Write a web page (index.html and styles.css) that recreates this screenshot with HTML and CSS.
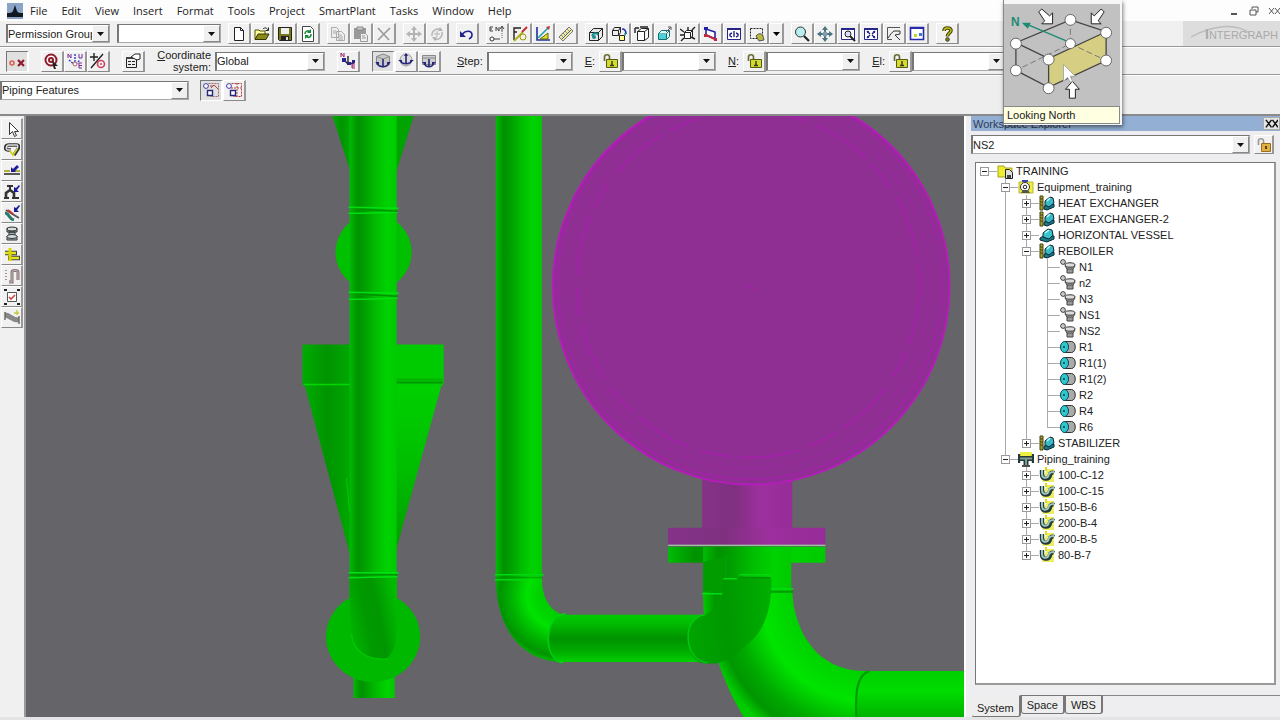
FILE: index.html
```
<!DOCTYPE html>
<html lang="en">
<head>
  <meta charset="UTF-8" />
  <meta name="viewport" content="width=device-width, initial-scale=1" />
  <title>SmartPlant 3D</title>
  <link rel="stylesheet" href="styles.css">
</head>
<body>
  <!-- Icon sprite, every symbol on a 16px grid -->
  <svg class="sprite" aria-hidden="true">
    <symbol id="new" viewBox="0 0 16 16"><path d="M3.500 1.500h6l3 3v10h-9z" fill="#fff" stroke="#222"/><path d="M9.500 1.500v3h3" fill="none" stroke="#222"/></symbol>
    <symbol id="open" viewBox="0 0 16 16"><path d="M1 13V4h4l1 1h5v3" fill="#ffffa0" stroke="#555000"/><path d="M1 13.500 4 8h11l-3 5.500z" fill="#8a8a1a" stroke="#333300"/><path d="M9 3c2-2 4-1 5 1M14.500 1.500v3h-3" fill="none" stroke="#222"/></symbol>
    <symbol id="save" viewBox="0 0 16 16"><path d="M1.500 1.500h13v13h-12l-1-1z" fill="#77771a" stroke="#222"/><path d="M4 2h8v6H4z" fill="#eee"/><path d="M4 10h8v4H4z" fill="#222"/><path d="M9 11h2v3H9z" fill="#ddd"/></symbol>
    <symbol id="refresh" viewBox="0 0 16 16"><path d="M2.500 .5h8l3 3v12h-11z" fill="#fff" stroke="#444"/><path d="M5 8c0-3 3-4 5-2M11 8c0 4-3 4-5 2" fill="none" stroke="#168c38" stroke-width="1.600"/><path d="M11 3v4H7zM5 13V9h4z" fill="#168c38"/></symbol>
    <symbol id="copy" viewBox="0 0 16 16"><path d="M1.500 1.500h5l2 2v8h-7zM6.500 5.500h5l3 3v6h-8z" fill="#eee" stroke="#aaa"/><path d="M3 5h3M3 7h3M8 9h4M8 11h5M8 13h5" stroke="#aaa"/></symbol>
    <symbol id="paste" viewBox="0 0 16 16"><path d="M1 2h12v11H1z" fill="#999"/><path d="M4 1h6v3H4z" fill="#ccc" stroke="#888"/><path d="M7.500 7.500h5l2 2v6h-7z" fill="#eee" stroke="#999"/><path d="M9 10h3M9 12h4" stroke="#999"/></symbol>
    <symbol id="delete" viewBox="0 0 16 16"><path d="M2 2l11 12M14 2L2 14" stroke="#999" stroke-width="1.600"/></symbol>
    <symbol id="move" viewBox="0 0 16 16"><path d="M8 2v12M2 8h12" stroke="#b4b4b4" stroke-width="2"/><path d="M8 0l3 4H5zM8 16l3-4H5zM0 8l4-3v6zM16 8l-4-3v6z" fill="#b4b4b4"/></symbol>
    <symbol id="rotate" viewBox="0 0 16 16"><path d="M3 10a6 6 0 0 1 9-6M13 6a6 6 0 0 1-8 7" fill="none" stroke="#b4b4b4" stroke-width="1.400"/><path d="M8 5v6M5 8h6" stroke="#b4b4b4"/><path d="M11 1l3 4-5 0zM6 15l-3-4 5 0z" fill="#b4b4b4"/></symbol>
    <symbol id="undo" viewBox="0 0 16 16"><path d="M3 9c3-5 10-5 10 0 0 2-1 3-3 4" fill="none" stroke="#23238c" stroke-width="1.600"/><path d="M1 5v6h6z" fill="#23238c"/></symbol>
    <symbol id="pointen" viewBox="0 0 16 16"><path d="M4 1H1v4h3M1 3h2M7 5V1l3 4V1M13 5V0M11 3l2-3 2 3M5 13h6" fill="none" stroke="#444"/><circle cx="3" cy="13" r="2" fill="#fff" stroke="#333"/><path d="M13 5v8" stroke="#666" stroke-dasharray="1 1"/></symbol>
    <symbol id="sketch" viewBox="0 0 16 16"><path d="M2 14V2h7M2 6h3" fill="none" stroke="#222" stroke-width="1.400"/><path d="M2 15l9-9" stroke="#b0b020" stroke-width="2"/><path d="M10 6l5-5" stroke="#c03030" stroke-width="2"/><circle cx="11" cy="11" r="3" fill="none" stroke="#999900"/></symbol>
    <symbol id="angle" viewBox="0 0 16 16"><path d="M2 1v13h13" fill="none" stroke="#2030a0" stroke-width="1.600"/><path d="M5 13l8-6v6z" fill="#dede2a" stroke="#666600"/><path d="M3 12L13 2" stroke="#20a0b0" stroke-width="1.600"/><path d="M11 1l4-1-1 4z" fill="#c03030"/></symbol>
    <symbol id="ruler" viewBox="0 0 16 16"><path d="M1 11L11 1l4 4L5 15z" fill="#eeee9c" stroke="#777"/><path d="M4 13l9-9" stroke="#5050aa"/><path d="M3 9l2 2M5 7l2 2M7 5l2 2M9 3l2 2" stroke="#888"/></symbol>
    <symbol id="cube" viewBox="0 0 16 16"><path d="M1.500 6.500h9v8h-9zM1.500 6.500l4-4h9l-4 4M14.500 2.500v8l-4 4" fill="#e6e6e6" stroke="#222"/><path d="M4 10c2-4 5-3 6-1" fill="none" stroke="#189090" stroke-width="2"/><circle cx="6" cy="11" r="2" fill="#189090"/></symbol>
    <symbol id="cuberot" viewBox="0 0 16 16"><path d="M1.500 4.500h6v5h-6zM1.500 4.500l2-3h6l-2 3M9.500 1.500v5l-2 3" fill="#eee" stroke="#222"/><path d="M8.500 9.500h5v5h-5z" fill="#ffff8a" stroke="#222"/><path d="M11 3c3 0 4 2 4 5" fill="none" stroke="#2030b0" stroke-width="1.600"/><path d="M13 7h3l-2 3z" fill="#189090"/></symbol>
    <symbol id="clip" viewBox="0 0 16 16"><path d="M3.500 5.500h7v9h-7zM3.500 5.500l4-3h7l-4 3M14.500 2.500v9l-4 3" fill="#fff" stroke="#222"/><path d="M1 2h4M1 2v5M6 1h8" stroke="#222" stroke-width="1.400"/></symbol>
    <symbol id="box" viewBox="0 0 16 16"><path d="M1.500 7.500h8v6h-8z" fill="#4ad2d8" stroke="#146a70"/><path d="M1.500 7.500l3-3h8l-3 3M12.500 4.500v6l-3 3" fill="#dff" stroke="#146a70"/><path d="M9 6l5-5h-3M14 1v3" fill="none" stroke="#555"/></symbol>
    <symbol id="explode" viewBox="0 0 16 16"><path d="M4.500 6.500h6v6h-6zM4.500 6.500l2-2h6l-2 2M12.500 4.500v6l-2 2" fill="#fff" stroke="#222"/><path d="M0 3l4 3M15 1l-3 3M1 15l3-3M15 13l-4-2M8 1v3M0 9h4" stroke="#222" stroke-width="1.400"/></symbol>
    <symbol id="plane" viewBox="0 0 16 16"><path d="M3 3l9 3v7L3 9z" fill="#fff" stroke="#2222a0" stroke-width="1.600"/><path d="M3 9l9 4" stroke="#c02840" stroke-width="2"/><path d="M1 1h4v3H1z" fill="#2222a0"/><path d="M1 8h3v3H1zM11 12h3v3h-3z" fill="#c02840"/></symbol>
    <symbol id="window" viewBox="0 0 16 16"><path d="M1.500 2.500h13v11h-13z" fill="#fff" stroke="#26268a"/><path d="M1 2h14v2H1z" fill="#26268a"/><path d="M6 7c-3 1-3 3 0 4M10 7c3 1 3 3 0 4M8 5v6" fill="none" stroke="#26268a" stroke-width="1.400"/></symbol>
    <symbol id="select" viewBox="0 0 16 16"><path d="M1.500 2.500h12v10h-12z" fill="none" stroke="#222" stroke-dasharray="2 1"/><path d="M7 10c2-3 6-3 7 0l1 4-5 1z" fill="#baba3c" stroke="#555"/></symbol>
    <symbol id="zoom" viewBox="0 0 16 16"><circle cx="6.500" cy="6" r="5" fill="#b8eef0" stroke="#333"/><path d="M10 10l5 5" stroke="#222" stroke-width="2.200"/></symbol>
    <symbol id="pan" viewBox="0 0 16 16"><path d="M8 2v12M1 8h14" stroke="#4c7480" stroke-width="2"/><path d="M8 0l3 4H5zM8 16l3-4H5zM0 8l4-3v6zM16 8l-4-3v6z" fill="#4c7480"/><circle cx="8" cy="8" r="2.500" fill="#7e9da8"/></symbol>
    <symbol id="zoomarea" viewBox="0 0 16 16"><path d="M1.500 2.500h13v11h-13z" fill="#fff" stroke="#26268a"/><path d="M1 2h14v2H1z" fill="#26268a"/><circle cx="8" cy="8" r="3" fill="#ddf" stroke="#222"/><path d="M10 10l5 5" stroke="#222" stroke-width="2"/></symbol>
    <symbol id="fit" viewBox="0 0 16 16"><path d="M1.500 2.500h13v11h-13z" fill="#fff" stroke="#26268a"/><path d="M1 2h14v2H1z" fill="#26268a"/><path d="M4 5l3 3M12 5L9 8M4 12l3-3M12 12L9 9" stroke="#26268a" stroke-width="1.400"/><path d="M4 5h2v2H4zM10 5h2v2h-2zM4 10h2v2H4zM10 10h2v2h-2z" fill="#26268a"/></symbol>
    <symbol id="hand" viewBox="0 0 16 16"><path d="M14 1.500H1.500v12H6" fill="none" stroke="#555"/><path d="M2 12c2-3 4-6 6-7l6 0v3l-5 1 5 5" fill="#eee" stroke="#333"/></symbol>
    <symbol id="common" viewBox="0 0 16 16"><path d="M1.500 1.500h13v12h-13z" fill="#fff" stroke="#2828a8" stroke-width="1.600"/><path d="M1 1h14v2H1z" fill="#2828a8"/><path d="M5 8h3v3H5z" fill="#d0d030"/><path d="M10 7h3v3h-3z" fill="#3a78c8"/></symbol>
    <symbol id="help" viewBox="0 0 16 16"><path d="M5 5c0-4 7-4 7-.5C12 7 8.500 7 8.500 10.500" fill="none" stroke="#444400" stroke-width="3.600"/><path d="M5 5c0-4 7-4 7-.5C12 7 8.500 7 8.500 10" fill="none" stroke="#c8c81e" stroke-width="1.400"/><circle cx="8.500" cy="13.500" r="1.800" fill="#888810" stroke="#333"/></symbol>
    <symbol id="ox" viewBox="0 0 16 16"><circle cx="3" cy="10" r="2" fill="none" stroke="#e06050" stroke-width="1.600"/><path d="M9 7l6 6M15 7l-6 6" stroke="#8e1a2a" stroke-width="2.200"/></symbol>
    <symbol id="target" viewBox="0 0 16 16"><circle cx="7" cy="7" r="5.500" fill="#fff" stroke="#8e1a2a" stroke-width="2"/><circle cx="7" cy="7" r="2" fill="none" stroke="#8e1a2a" stroke-width="2"/><path d="M8 7l6 6-3 0 1 3-2 0-1-3z" fill="#222"/></symbol>
    <symbol id="neu" viewBox="0 0 16 16"><path d="M1 5V1l3 4V1M12 1v4h3V1" fill="none" stroke="#7a2a9a"/><path d="M8 1v9M2 7l6 5 5-5" fill="none" stroke="#2838b8" stroke-width="1.400" stroke-dasharray="2 1"/><circle cx="8" cy="11" r="2" fill="#fff" stroke="#c06060"/><path d="M15 10h-3v5h3M12 12.500h3" fill="none" stroke="#7a2a9a"/></symbol>
    <symbol id="plusc" viewBox="0 0 16 16"><path d="M4 0v8M0 4h8M1 15L13 1" stroke="#222" stroke-width="1.400"/><circle cx="11" cy="11" r="3.500" fill="none" stroke="#d04060" stroke-width="1.600"/><circle cx="11" cy="11" r="1" fill="#d04060"/></symbol>
    <symbol id="props" viewBox="0 0 16 16"><path d="M1.500 4.500h10v10h-10z" fill="#eee" stroke="#222"/><path d="M1 4h10v2H1z" fill="#444"/><path d="M3 8.500h3M7 8.500h3M3 11.500h3M7 11.500h3" stroke="#222"/><path d="M6 4l4-3h5v5l-3 1z" fill="#fff" stroke="#222"/></symbol>
    <symbol id="axis" viewBox="0 0 16 16"><path d="M1 4V0l3 4V0" fill="none" stroke="#98206a"/><path d="M3 6l5 5 6-1M8 3v8" fill="none" stroke="#222" stroke-width="1.400"/><path d="M2 5h4v4H2zM7 9h4v3H7zM12 7h3v3h-3z" fill="#26268a"/><path d="M15 11h-3v4h3M12 13h3" fill="none" stroke="#98206a"/></symbol>
    <symbol id="anchor1" viewBox="0 0 16 16"><path d="M1.500 3.500L8 1l6.500 2.500v8L8 14l-6.500-2.500z" fill="#c8c8c8" stroke="#888"/><path d="M1.500 3.500L8 6l6.500-2.500" fill="none" stroke="#888"/><path d="M8 6v8M2 10c2 5 10 5 12 0" fill="none" stroke="#26267a" stroke-width="1.600"/><path d="M0 9h4v3zM16 9h-4v3z" fill="#26267a"/></symbol>
    <symbol id="anchor2" viewBox="0 0 16 16"><circle cx="8" cy="7" r="6" fill="#ddd" stroke="#999"/><path d="M8 1v10M2 7c2 5 10 5 12 0" fill="none" stroke="#26267a" stroke-width="1.600"/><path d="M0 7h4v3zM16 7h-4v3zM6 3l2-3 2 3z" fill="#26267a"/></symbol>
    <symbol id="anchor3" viewBox="0 0 16 16"><path d="M1.500 2.500h13v9h-13z" fill="#ccc" stroke="#888"/><path d="M1 5h14" stroke="#888"/><path d="M8 6v8M3 10c2 5 8 5 10 0" fill="none" stroke="#26267a" stroke-width="1.600"/><path d="M1 9h4v3zM15 9h-4v3z" fill="#26267a"/></symbol>
    <symbol id="lock" viewBox="0 0 16 16"><path d="M2.500 8V4c0-3 5-3 5 0v2" fill="none" stroke="#666630" stroke-width="1.600"/><path d="M4.500 6.500h11v8h-11z" fill="#d4dc28" stroke="#555a10"/><path d="M10 8v4M8 12.500h4" stroke="#333" stroke-width="1.400"/></symbol>
    <symbol id="goldlock" viewBox="0 0 16 16"><path d="M2.500 8V4c0-3 5-3 5 0v3" fill="none" stroke="#999" stroke-width="1.600"/><path d="M5.500 6.500h9v8h-9z" fill="#e0b040" stroke="#9a7020"/><path d="M10 9v3" stroke="#604010" stroke-width="2"/></symbol>
    <symbol id="feat1" viewBox="0 0 16 16"><path d="M5.500 1.500h10v13h-8" fill="none" stroke="#9a6a6a" stroke-dasharray="2 1"/><circle cx="3" cy="4" r="2.400" fill="#fff" stroke="#3a3aa8"/><path d="M4.500 8.500h5v5h-5z" fill="#fff" stroke="#26267a" stroke-width="1.400"/><path d="M8 6l3-3 4 4M7 4h3" fill="none" stroke="#b04040"/></symbol>
    <symbol id="feat2" viewBox="0 0 16 16"><path d="M5.500 1.500h10v13h-8M11 1v13M5 6h10" fill="none" stroke="#b03a3a" stroke-dasharray="2 1"/><circle cx="3" cy="4" r="2.400" fill="#fff" stroke="#3a3aa8"/><path d="M4.500 8.500h5v5h-5z" fill="#fff" stroke="#26267a" stroke-width="1.400"/></symbol>
    <symbol id="arrow" viewBox="0 0 16 16"><path d="M5.500 1.500v12l3-3 2 5 2-1-2-4h4z" fill="#fff" stroke="#333"/></symbol>
    <symbol id="route" viewBox="0 0 16 16"><path d="M7 8H4C0 8 1 3 5 3h8c2 0 2 2 1 4l-4 6" fill="none" stroke="#333" stroke-width="3.400"/><path d="M7 8H4C1 8 2 3 5 3h8c1 0 1 2 0 4" fill="none" stroke="#ddd" stroke-width="1.400"/><path d="M6 9l3 4 4-6" fill="none" stroke="#d0d028" stroke-width="1.800"/></symbol>
    <symbol id="insert" viewBox="0 0 16 16"><path d="M0 8h6M10 8h6" stroke="#999900" stroke-width="1.400"/><path d="M0 11h16" stroke="#333" stroke-width="1.600"/><path d="M7 9V4l2 2 4-4 2 2-4 4 1 1z" fill="#1c1c98"/></symbol>
    <symbol id="valve" viewBox="0 0 16 16"><path d="M3 2h6M6 2v4" stroke="#333" stroke-width="2"/><path d="M2 14V9l4-3 4 3v5" fill="none" stroke="#333" stroke-width="2.600"/><path d="M0 14h5M8 14h7" stroke="#333" stroke-width="2"/><path d="M10 8V3l2 1 3-3 1 1-3 4 2 2z" fill="#1c1c98"/></symbol>
    <symbol id="tap" viewBox="0 0 16 16"><path d="M1 8c4 0 4 6 9 7" fill="none" stroke="#287a70" stroke-width="3"/><path d="M2 5l8 5 5 3" fill="none" stroke="#555" stroke-width="2"/><path d="M4 5l5 4" stroke="#d03030" stroke-width="2"/><path d="M10 7V2l2 1 3-3 1 1-3 4 2 2z" fill="#1c1c98"/></symbol>
    <symbol id="flangepair" viewBox="0 0 16 16"><path d="M3 2h10v4H3zM5 6h6v4H5zM3 10h10v4H3z" fill="#9fb0b0" stroke="#333"/><ellipse cx="8" cy="3" rx="5" ry="2" fill="#d4dede" stroke="#333"/><ellipse cx="8" cy="10.500" rx="5" ry="2" fill="#d4dede" stroke="#333"/></symbol>
    <symbol id="yellowpipe" viewBox="0 0 16 16"><path d="M1 6h12M4 11h12" stroke="#444" stroke-width="4.400"/><path d="M1 6h11M5 11h10" stroke="#e4e41c" stroke-width="2.600"/><path d="M6 1v13" stroke="#d8d800" stroke-width="3"/></symbol>
    <symbol id="bend" viewBox="0 0 16 16"><path d="M5 14h3V4c0-2 6-2 6 0v8" fill="none" stroke="#777" stroke-width="3"/><path d="M5 14h3V4c0-2 6-2 6 0v8" fill="none" stroke="#e0b0b0"/><path d="M2 2v12" stroke="#999" stroke-dasharray="1 2" stroke-width="2"/></symbol>
    <symbol id="frame" viewBox="0 0 16 16"><path d="M3.500 3.500h9v9h-9z" fill="#fff" stroke="#555"/><path d="M5 8l2 2 4-4" fill="none" stroke="#d04040" stroke-width="1.600"/><path d="M0 0h3v2H0zM13 0h3v2h-3zM0 14h3v2H0zM13 14h3v2h-3z" fill="#222"/></symbol>
    <symbol id="flex" viewBox="0 0 16 16"><path d="M1 5c5 0 6 5 14 5" fill="none" stroke="#888" stroke-width="5"/><path d="M1 2v8M15 6v8" stroke="#666" stroke-width="1.400"/><path d="M13 0v5M10 3h5" stroke="#c8c840" stroke-width="1.400"/></symbol>
    <symbol id="t-root" viewBox="0 0 16 16"><path d="M1 3h6l1 2h7v9H1z" fill="#eeee30" stroke="#aaa020"/><path d="M8.500 6.500h4l3 3v6h-7z" fill="#ddd" stroke="#222"/><path d="M10 12h4v3h-4z" fill="#444"/></symbol>
    <symbol id="t-equip" viewBox="0 0 16 16"><path d="M1 3h14v11H1z" fill="#eeee40" stroke="#b8b830"/><circle cx="7" cy="8" r="4.500" fill="#fff" stroke="#333"/><circle cx="7" cy="8" r="1.800" fill="none" stroke="#222"/><path d="M3 14l2-3h5l2 3z" fill="#555"/><path d="M4 2h6" stroke="#3848a8" stroke-width="2"/></symbol>
    <symbol id="t-vessel" viewBox="0 0 16 16"><path d="M1 11l5-3 9 1v3l-7 3-7-2z" fill="#157a84" stroke="#123"/><path d="M4 10V6l5-4 4 1 1 5-4 4z" fill="#38c4cc" stroke="#123"/><path d="M6 6l4-3" stroke="#bff" stroke-width="1.400"/></symbol>
    <symbol id="t-ladder" viewBox="0 0 16 16"><path d="M1 1h3v14H1z" fill="#aaa028" stroke="#444410"/><path d="M1 4h3M1 7h3M1 10h3" stroke="#444410"/><path d="M5 11l10-2v3l-7 3-3-1z" fill="#157a84" stroke="#123"/><path d="M6 10V6l5-4 3 1 1 5-5 4z" fill="#38bcc4" stroke="#123"/><path d="M8 6l3-3" stroke="#bff" stroke-width="1.400"/></symbol>
    <symbol id="t-nozzle" viewBox="0 0 16 16"><circle cx="3" cy="3" r="2.300" fill="#fff" stroke="#222"/><path d="M3 2.500v1" stroke="#222"/><path d="M7 8h6v6H7z" fill="#999" stroke="#444"/><path d="M5 7l2 3h6l2-3" fill="#bbb" stroke="#444"/><ellipse cx="10" cy="6" rx="5" ry="2.200" fill="#ddd" stroke="#333"/></symbol>
    <symbol id="t-shape" viewBox="0 0 16 16"><path d="M4.500 2.500h7c5 0 5 11 0 11h-7z" fill="#aaa" stroke="#333"/><ellipse cx="4.500" cy="8" rx="4" ry="5.500" fill="#2ec8ca" stroke="#145"/><path d="M4 7v2" stroke="#033" stroke-width="1.400"/></symbol>
    <symbol id="t-piping" viewBox="0 0 16 16"><path d="M2 1h12v9H2z" fill="#eeee40"/><path d="M1 3v9M15 3v9" stroke="#243a38" stroke-width="2.400"/><path d="M2 7.500h12M8 8v6" stroke="#243a38" stroke-width="5"/><path d="M2 7.500h12M8 8v6" stroke="#7e9a98" stroke-width="2"/><path d="M4 15h8" stroke="#222" stroke-width="1.600"/></symbol>
    <symbol id="t-line" viewBox="0 0 16 16"><path d="M8 2h7v13H3z" fill="#eeee60"/><path d="M3 3v4c0 6 7 6 8 1 0-2 2-3 4-2" fill="none" stroke="#243a38" stroke-width="4.400"/><path d="M3 3v4c0 5 6 5 7 0 1-2 3-2 5-2" fill="none" stroke="#9cc4c0" stroke-width="2"/><path d="M7 0v4" stroke="#dada20" stroke-width="2"/></symbol>
  </svg>

  <header class="menubar">
    <svg class="logo" viewBox="0 0 16 16" aria-hidden="true"><path d="M0 0h16v16H0z" fill="#8ba3c7"/><path d="M8 2l2 6c1 2 3 2 6 2v4H0v-4c3 0 5 0 6-2z" fill="#101820"/></svg>
    <nav>
      <button>File</button>
      <button>Edit</button>
      <button>View</button>
      <button>Insert</button>
      <button>Format</button>
      <button>Tools</button>
      <button>Project</button>
      <button>SmartPlant</button>
      <button>Tasks</button>
      <button>Window</button>
      <button>Help</button>
    </nav>
    <div class="window-buttons">
      <button aria-label="Minimize"><svg viewBox="0 0 12 12"><path d="M3 9h6" stroke="#555" stroke-width="2"/></svg></button>
      <button aria-label="Restore"><svg viewBox="0 0 12 12"><path d="M4 4V2h6v5H8M2 5h6v5H2z" fill="none" stroke="#555"/></svg></button>
      <button aria-label="Close"><svg viewBox="0 0 12 12"><path d="M1 3l5 6M6 3L1 9M7 3l5 6M12 3L7 9" stroke="#555"/></svg></button>
    </div>
  </header>

  <div class="toolbar standard">
    <span class="combo w-medium"><select aria-label="Permission Group"><option>Permission Group</option></select></span>
    <span class="combo w-medium"><select aria-label="Filter"><option></option></select></span>
    <div class="group" data-icons="new open save refresh"></div>
    <div class="group" data-icons="copy paste delete"></div>
    <div class="group" data-icons="move rotate"></div>
    <div class="group" data-icons="undo"></div>
    <div class="group" data-icons="pointen sketch angle ruler"></div>
    <div class="group" data-icons="cube cuberot clip box explode plane window select">
      <button class="tool narrow" aria-label="Select options"><svg viewBox="0 0 7 4"><path d="M0 0h7L3.500 4z"/></svg></button>
    </div>
    <div class="group" data-icons="zoom pan zoomarea fit hand common"></div>
    <div class="group" data-icons="help"></div>
    <div class="brand"><svg viewBox="0 0 60 20" aria-hidden="true"><path d="M0 13C20 2 44-2 58 9" fill="none" stroke="#bbb" stroke-width="1.400"/></svg><span><b>I</b>NTERGRAPH</span></div>
  </div>

  <div class="toolbar pinpoint">
    <div class="group" data-icons="ox" data-pressed="ox"></div>
    <div class="group" data-icons="target neu plusc"></div>
    <div class="group" data-icons="props"></div>
    <div class="field">
      <label class="two-line" for="coords"><u>C</u>oordinate system:</label>
      <span class="combo w-coords"><select id="coords"><option>Global</option></select></span>
    </div>
    <div class="group" data-icons="axis"></div>
    <div class="group" data-icons="anchor1 anchor2 anchor3" data-pressed="anchor1"></div>
    <div class="field step">
      <label for="step"><u>S</u>tep:</label>
      <span class="combo w-small"><select id="step"><option></option></select></span>
    </div>
    <div class="field">
      <label for="east"><u>E</u>:</label>
      <div class="group" data-icons="lock"></div>
      <span class="combo w-value"><select id="east"><option></option></select></span>
    </div>
    <div class="field">
      <label for="north"><u>N</u>:</label>
      <div class="group" data-icons="lock"></div>
      <span class="combo w-value"><select id="north"><option></option></select></span>
    </div>
    <div class="field">
      <label for="elevation"><u>E</u>l:</label>
      <div class="group" data-icons="lock"></div>
      <span class="combo w-value"><select id="elevation"><option></option></select></span>
    </div>
  </div>

  <div class="toolbar filter">
    <span class="combo w-filter"><select aria-label="Locate filter"><option>Piping Features</option></select></span>
    <div class="group" data-icons="feat1 feat2" data-pressed="feat1"></div>
  </div>

  <main>
    <aside class="side-tools group" data-icons="arrow route insert valve tap flangepair yellowpipe bend frame flex"></aside>

    <!-- Model view -->
    <svg class="model" viewBox="26 117 938 600" preserveAspectRatio="xMinYMin slice" role="img" aria-label="Model view">
      <defs>
        <linearGradient id="vpipe"><stop offset="0" stop-color="#00bc08"/><stop offset=".08" stop-color="#00a800"/><stop offset=".17" stop-color="#009200"/><stop offset=".28" stop-color="#009a00"/><stop offset=".55" stop-color="#00bc00"/><stop offset=".8" stop-color="#00d200"/><stop offset="1" stop-color="#00ca00"/></linearGradient>
        <linearGradient id="hpipe" x2="0" y2="1"><stop offset="0" stop-color="#00cc00"/><stop offset=".2" stop-color="#00ba00"/><stop offset=".5" stop-color="#009200"/><stop offset=".75" stop-color="#00a800"/><stop offset="1" stop-color="#00d000"/></linearGradient>
        <linearGradient id="bigh" x2="0" y2="1"><stop offset="0" stop-color="#00d000"/><stop offset=".2" stop-color="#00dc00"/><stop offset=".5" stop-color="#00ac00"/></linearGradient>
        <linearGradient id="coneL"><stop offset="0" stop-color="#00ac00"/><stop offset=".5" stop-color="#009400"/><stop offset="1" stop-color="#00a800"/></linearGradient>
        <linearGradient id="coneR" x2="0" y2="1"><stop offset="0" stop-color="#00d000"/><stop offset=".5" stop-color="#00be00"/><stop offset="1" stop-color="#009c00"/></linearGradient>
        <linearGradient id="purple"><stop offset="0" stop-color="#853389"/><stop offset=".35" stop-color="#7f307f"/><stop offset=".65" stop-color="#9d309e"/><stop offset="1" stop-color="#962c98"/></linearGradient>
        <radialGradient id="elbowA" gradientUnits="userSpaceOnUse" cx="560" cy="595" r="68"><stop offset=".3" stop-color="#00d000"/><stop offset=".5" stop-color="#00e200"/><stop offset=".72" stop-color="#00b400"/><stop offset=".9" stop-color="#009400"/><stop offset="1" stop-color="#00c000"/></radialGradient>
        <radialGradient id="elbowB" gradientUnits="userSpaceOnUse" cx="866" cy="596" r="165"><stop offset=".44" stop-color="#00d000"/><stop offset=".64" stop-color="#00e400"/><stop offset=".82" stop-color="#00a800"/><stop offset=".92" stop-color="#009600"/><stop offset="1" stop-color="#00cc00"/></radialGradient>
        <linearGradient id="elbowC" x1="0" y1=".4" x2="1" y2=".3"><stop offset="0" stop-color="#00a400"/><stop offset=".45" stop-color="#009800"/><stop offset="1" stop-color="#00ae00"/></linearGradient>
        <linearGradient id="elbowD" x1="0" y1=".65" x2="1" y2=".3"><stop offset="0" stop-color="#00b400"/><stop offset=".35" stop-color="#009a00"/><stop offset=".6" stop-color="#009600"/><stop offset="1" stop-color="#00bc00"/></linearGradient>
      </defs>
      <path d="M26 117h938v620H26z" fill="#656468"/>

      <!-- left vertical line -->
      <path d="M332 117h18v56z" fill="url(#coneL)"/>
      <path d="M413 117h-18v58z" fill="#00a400"/>
      <circle cx="373" cy="253" r="38" fill="#00c000"/>
      <path d="M302 345h48v41h-48z" fill="url(#coneL)"/>
      <path d="M304 385h46v172z" fill="url(#coneL)"/>
      <path d="M395 345h48v38l-1 3h-47z" fill="#00ca00"/>
      <path d="M441 385h-46v167z" fill="url(#coneR)"/>
      <path d="M303 385h47" stroke="#00d800" stroke-width="1.500"/>
      <path d="M395 380h47" stroke="#00b000" stroke-width="2"/>
      <path d="M395 383h47" stroke="#009800" stroke-width="2"/>
      <path d="M353 670h41v28h-41z" fill="url(#vpipe)"/>
      <ellipse cx="372.500" cy="637" rx="47" ry="45" fill="#00b800"/>
      <path d="M349 117h47v485h-47z" fill="url(#vpipe)"/>
      <path d="M349 577h47v50c0 18-4 28-10 31-16 3-33-4-35-25-2-14-2-30-2-56z" fill="url(#elbowD)"/>
      <path d="M351 634c1 17 15 27 37 25" fill="none" stroke="#00cc00"/>
      <path d="M346 478l3 34" stroke="#00c800"/>
      <g fill="none" stroke-width="1.500">
        <path d="M348 208l50 1M348 214h18l31-1M348 293l50 1M348 300h18l31-1M348 573h50M348 578l49-1" stroke="#00e010"/>
        <path d="M360 210l37 2M360 295l37 2M349 575l48 0" stroke="#009000"/>
      </g>

      <!-- second vertical with elbow into the horizontal run -->
      <path d="M495 117h46v462h-46z" fill="url(#vpipe)"/>
      <path d="M495 578h46c0 18 6 30 18 36v48c-42-2-64-38-64-84z" fill="url(#elbowA)"/>
      <path d="M558 615h145v47H558c-13-8-13-39 0-47z" fill="url(#hpipe)"/>
      <path d="M494 575h49M494 580h30" stroke="#00d810" stroke-width="1.500"/>
      <path d="M495 578h47" stroke="#009a00"/>
      <path d="M565 614c-23 0-23 47-3 49" fill="none" stroke="#00d010" stroke-width="1.500"/>

      <!-- nozzle flange and large elbow -->
      <path d="M667 547h157v16H667z" fill="url(#vpipe)"/>
      <path d="M702 547h88v46h-88z" fill="url(#vpipe)"/>
      <path d="M702 592h89c2 40 25 79 72 79v110c-72 0-116-34-146-119-12-20-15-40-15-70z" fill="url(#elbowB)"/>
      <path d="M862 671h102v100H858c-6-40-6-80 4-100z" fill="url(#bigh)"/>
      <path d="M868 671c-14 4-14 26-13 48" fill="none" stroke="#009a00" stroke-width="2"/>
      <path d="M701 594h22M767 589h25" stroke="#00e010" stroke-width="1.500"/>
      <path d="M766 592h26" stroke="#009c00" stroke-width="2"/>
      <path d="M702 562l23-6v22l-3 14h-20z" fill="#009c00"/>
      <path d="M725 556v25" stroke="#00a810"/>
      <path d="M723 578h47c1 36-9 56-27 69-12 13-27 19-43 16-18-6-18-42 4-48 14-8 19-19 19-37z" fill="url(#elbowC)"/>
      <path d="M704 615c-23 0-23 45 2 48" fill="none" stroke="#00c810" stroke-width="1.500"/>
      <path d="M722 579h14M738 575h32" stroke="#00d810" stroke-width="1.500"/>
      <path d="M738 578h31" stroke="#009000" stroke-width="1.500"/>

      <!-- selected vessel -->
      <path d="M701 470h90v60h-90z" fill="url(#purple)"/>
      <path d="M667 528h157v17H667z" fill="url(#purple)"/>
      <circle cx="750" cy="287" r="198" fill="#8f2e93" stroke="#b51cba" stroke-width="2"/>
      <g fill="none" stroke="#ab20b0">
        <ellipse cx="749" cy="285" rx="192" ry="195" opacity=".7" stroke-width="1.500"/>
        <ellipse cx="747" cy="285" rx="171" ry="173" stroke-width="2" stroke-dasharray="60 8 30 12" opacity=".7"/>
        <ellipse cx="749" cy="286" rx="179" ry="183" opacity=".35"/>
        <path d="M744 284l4 3 6 4" opacity=".8"/>
      </g>
      <path d="M667 545.500h157" stroke="#b4dcb8"/>
    </svg>

    <section class="explorer">
      <header class="panel-title">
        <h2>Workspace Explorer</h2>
        <button aria-label="Close explorer"><svg viewBox="0 0 14 10"><path d="M1 1l6 8M7 1L1 9M8 1l6 8M14 1L8 9" stroke="#111" stroke-width="1.600"/></svg></button>
      </header>
      <div class="finder">
        <span class="combo"><select aria-label="Selected object"><option>NS2</option></select></span>
        <div class="group" data-icons="goldlock"></div>
      </div>
      <div class="tree"><ul id="tree"></ul></div>
      <div class="tabs">
        <button class="active">System</button>
        <button>Space</button>
        <button>WBS</button>
      </div>
    </section>
  </main>

  <!-- Common view chooser floats above the toolbars -->
  <div class="view-picker">
    <svg viewBox="1003 4 117 103" role="img" aria-label="Common views">
      <path d="M1003 4h117v103h-117z" fill="#c1c1c1"/>
      <path d="M1048 59l58-27v29l-58 27z" fill="#d6cf83"/>
      <g fill="none" stroke="#777" stroke-dasharray="6 3"><path d="M1070 20v24l-55 27M1070 44l36 17"/></g>
      <path d="M1070 20l36 12v29l-58 27-33-17V43zM1015 43l33 16 58-27M1048 59v29" fill="none" stroke="#444" stroke-width="1.300"/>
      <path d="M1070 43l-45-19" stroke="#1d8a72" stroke-width="1.300"/>
      <path d="M1021 23l9 0-3 6z" fill="#1d8a72"/>
      <g fill="#fff" stroke="#666"><circle cx="1070" cy="20" r="5.500"/><circle cx="1106" cy="33" r="5.500"/><circle cx="1106" cy="61" r="5.500"/><circle cx="1070" cy="44" r="5"/><circle cx="1015" cy="44" r="5.500"/><circle cx="1048" cy="60" r="5.500"/><circle cx="1015" cy="71" r="5.500"/><circle cx="1048" cy="89" r="5.500"/></g>
      <g fill="#fff" stroke="#222"><path d="M1038 12l3-3 8 7 3-3v11h-11l3-3z"/><path d="M1104 12l-3-3-7 7-3-3v11h10l-3-3z"/><path d="M1069 99v-9h-4l7-8 7 8h-4v9z"/></g>
      <path d="M1063 65v17l4-4 3 5 2-1-2-5h5z" fill="#fff" stroke="#aaa"/>
      <text x="1010" y="26" class="north">N</text>
    </svg>
    <p>Looking North</p>
  </div>

  <script>
    const SVG = 'http://www.w3.org/2000/svg';

    function icon(id) {
      const svg = document.createElementNS(SVG, 'svg');
      const use = document.createElementNS(SVG, 'use');
      use.setAttribute('href', '#' + id);
      svg.setAttribute('class', 'icon');
      svg.appendChild(use);
      return svg;
    }

    // Fill each toolbar group with its buttons
    document.querySelectorAll('[data-icons]').forEach(group => {
      const extra = group.firstElementChild;
      group.dataset.icons.split(' ').forEach(id => {
        const button = document.createElement('button');
        button.className = 'tool' + (id === group.dataset.pressed ? ' pressed' : '');
        button.setAttribute('aria-label', id);
        button.appendChild(icon(id));
        group.insertBefore(button, extra);
      });
    });

    const leaf = (name, type) => ({ name, icon: type });
    const closed = (name, type) => ({ name, icon: type, closed: true });

    const data = [{
      name: 'TRAINING', icon: 't-root', children: [
        { name: 'Equipment_training', icon: 't-equip', children: [
          closed('HEAT EXCHANGER', 't-ladder'),
          closed('HEAT EXCHANGER-2', 't-ladder'),
          closed('HORIZONTAL VESSEL', 't-vessel'),
          { name: 'REBOILER', icon: 't-ladder', children: [
            ...['N1', 'n2', 'N3', 'NS1', 'NS2'].map(n => leaf(n, 't-nozzle')),
            ...['R1', 'R1(1)', 'R1(2)', 'R2', 'R4', 'R6'].map(n => leaf(n, 't-shape'))
          ] },
          closed('STABILIZER', 't-ladder')
        ] },
        { name: 'Piping_training', icon: 't-piping', children:
          ['100-C-12', '100-C-15', '150-B-6', '200-B-4', '200-B-5', '80-B-7'].map(n => closed(n, 't-line')) }
      ]
    }];

    function renderTree(items, list) {
      items.forEach(item => {
        const li = document.createElement('li');
        const row = document.createElement('div');
        row.className = 'row';

        const branch = document.createElement('span');
        branch.className = 'branch';
        if (item.children || item.closed) {
          const toggle = document.createElement('button');
          toggle.className = item.closed ? 'toggle closed' : 'toggle';
          toggle.setAttribute('aria-label', item.name);
          branch.appendChild(toggle);
        }
        row.append(branch, icon(item.icon));

        const label = document.createElement('span');
        label.textContent = item.name;
        row.appendChild(label);
        li.appendChild(row);

        if (item.children) {
          const ul = document.createElement('ul');
          renderTree(item.children, ul);
          li.appendChild(ul);
        }
        list.appendChild(li);
      });
    }

    renderTree(data, document.getElementById('tree'));
  </script>
</body>
</html>
```
FILE: styles.css
```
* {
  box-sizing: border-box;
}

body {
  margin: 0;
  min-height: 100vh;
  display: flex;
  flex-direction: column;
  overflow-x: hidden;
  background-color: #f0f0f0;
  color: #222;
  font-family: "Liberation Sans", Arial, sans-serif;
  font-size: 11px;
}

button, select {
  font: inherit;
  color: inherit;
}

.sprite {
  display: none;
}

.icon {
  width: 16px;
  height: 16px;
  flex: none;
  display: block;
}

/* Menu */
.menubar {
  display: flex;
  align-items: center;
  height: 21px;
  padding-left: 7px;
  background-color: #fdfdfd;
  font-family: "Open Sans", "Noto Sans", sans-serif;
}

.logo {
  width: 16px;
  height: 16px;
}

.menubar nav {
  display: flex;
  flex: 1;
}

.menubar button {
  border: 0;
  padding: 0 7px;
  background: none;
}

.menubar .window-buttons {
  display: flex;
  gap: 8px;
}

.menubar .window-buttons button {
  padding: 0;
}

.window-buttons svg {
  display: block;
  width: 12px;
  height: 12px;
}

/* Toolbars */
.toolbar {
  display: flex;
  align-items: center;
  gap: 7px;
  padding-left: 6px;
  white-space: nowrap;
  border-bottom: 1px solid #999;
}

.toolbar > * {
  flex: none;
}

.standard {
  height: 26px;
}

.pinpoint {
  height: 28px;
  gap: 12px;
  border-top: 1px solid #fff;
}

.filter {
  height: 41px;
  padding: 0 0 10px;
  gap: 11px;
  border-bottom: 2px solid #8a8a8c;
  border-top: 1px solid #fff;
  background-color: #eee;
}

.group {
  display: flex;
}

.tool {
  width: 23px;
  height: 21px;
  padding: 0 2px;
  display: flex;
  align-items: center;
  justify-content: center;
  background-color: #f1f1f1;
  border: 1px solid;
  border-color: #fff #999 #888 #fff;
  border-right-width: 2px;
}

.tool.pressed {
  background-color: #e0e0e0;
  border-color: #777 #fff #fff #777;
}

.tool.narrow {
  width: 15px;
}

.narrow svg {
  width: 7px;
  height: 4px;
}

.combo {
  display: inline-grid;
  height: 19px;
  background-color: #fff;
  border: 1px solid;
  border-color: #777 #aaa #aaa #777;
  border-left-width: 2px;
}

.combo select {
  grid-area: 1 / 1;
  width: 100%;
  min-width: 0;
  padding: 0;
  border: 0;
  background: none;
  appearance: none;
}

.combo::after {
  content: "";
  grid-area: 1 / 1;
  justify-self: end;
  width: 15px;
  pointer-events: none;
  border: 1px solid;
  border-color: #fff #888 #888 #fff;
  background: #f0f0f0 url("data:image/svg+xml,%3Csvg xmlns='http://www.w3.org/2000/svg' width='7' height='4'%3E%3Cpath d='M0 0h7L3.500 4z' fill='%23111'/%3E%3C/svg%3E") no-repeat center;
}

.w-medium {
  width: 104px;
}

.w-coords {
  width: 110px;
}

.w-small {
  width: 86px;
}

.w-value {
  width: 94px;
}

.w-filter {
  width: 189px;
}

.field {
  display: flex;
  align-items: center;
}

.field label {
  margin-right: 4px;
}

.field.step {
  margin-left: 4px;
}

.two-line {
  width: 54px;
  line-height: 12px;
  text-align: right;
  white-space: normal;
}

.brand {
  display: flex;
  align-items: center;
  align-self: stretch;
  width: 97px;
  margin-left: auto;
  padding-left: 8px;
  background-color: #ddd;
  color: #aaa;
}

.brand svg {
  flex: none;
  width: 60px;
  height: 20px;
  margin-right: -46px;
}

.brand b {
  font-size: 14px;
}

/* Workspace */
main {
  flex: 1;
  display: grid;
  grid-template-columns: 26px minmax(0, 1fr) 316px;
  border-bottom: 3px solid #e4e4e6;
}

.side-tools {
  flex-direction: column;
  padding: 2px 1px;
  border-right: 2px solid #999;
}

.side-tools .tool {
  width: 22px;
}

.model {
  width: 100%;
  height: 100%;
  min-height: 0;
  display: block;
}

.explorer {
  display: flex;
  flex-direction: column;
  padding-left: 5px;
  border-left: 2px solid #fff;
  background-color: #eeeef0;
}

.panel-title {
  display: flex;
  align-items: center;
  justify-content: space-between;
  height: 15px;
  padding-left: 2px;
  background-color: #93afd4;
}

.panel-title h2 {
  margin: 0;
  font-size: 11px;
  font-weight: normal;
  color: #2c3c56;
}

.panel-title button {
  width: 17px;
  height: 13px;
  padding: 0 1px;
  background-color: #e4e4e4;
  border: 1px solid #aaa;
  display: flex;
  align-items: center;
}

.finder {
  display: flex;
  gap: 4px;
  padding: 4px 6px 8px 0;
}

.finder .combo {
  flex: 1;
}

.finder .tool {
  height: 19px;
  width: 20px;
}

.tree {
  flex: 1;
  margin: 0 4px 10px 4px;
  background-color: #fff;
  border: 1px solid #777;
  border-right: 2px solid #999;
  border-bottom: 2px solid #999;
}

.tree ul {
  list-style: none;
  margin: 0 0 0 21px;
  padding: 0;
}

.tree #tree {
  margin-left: 0;
}

/* Connector line down the middle of the branch column */
.tree li {
  background: linear-gradient(#aaa, #aaa) 8px 0 / 1px 100% no-repeat;
}

.tree li:last-child {
  background-size: 1px 8px;
}

#tree > li {
  background: none;
}

.row {
  display: flex;
  align-items: center;
  height: 16px;
}

.row .icon {
  margin-right: 3px;
}

.branch {
  width: 21px;
  height: 16px;
  padding: 4px;
  background: linear-gradient(#aaa, #aaa) 8px 8px / 13px 1px no-repeat;
}

.toggle {
  display: block;
  width: 9px;
  height: 9px;
  padding: 0;
  border: 1px solid #999;
  background: linear-gradient(#222, #222) center / 5px 1px no-repeat, #fff;
}

.toggle.closed {
  background: linear-gradient(#222, #222) center / 5px 1px no-repeat, linear-gradient(#222, #222) center / 1px 5px no-repeat, #fff;
}

.tabs {
  display: flex;
  height: 22px;
  align-items: flex-start;
  background: linear-gradient(#888, #888) 46px 0 / 100% 1px no-repeat;
}

.tabs button {
  height: 19px;
  padding: 0 5px;
  background-color: #eee;
  border: 1px solid #777;
  border-right-width: 2px;
  border-radius: 0 0 3px 3px;
}

.tabs .active {
  height: 22px;
  padding-top: 3px;
  border-color: #eee #777 #777 #eee;
}

/* View chooser */
.view-picker {
  position: absolute;
  top: 0;
  right: 158px;
  width: 119px;
  padding: 4px 2px 1px 0;
  background-color: #f6f6f6;
  border-left: 1px solid #888;
  box-shadow: 1px 2px 4px rgba(0, 0, 0, 0.5);
}

.view-picker svg {
  display: block;
  width: 100%;
}

.view-picker p {
  margin: 0;
  padding: 0 3px;
  line-height: 16px;
  background-color: #ffffe1;
  border: 1px solid #888;
  border-left: 0;
}

.north {
  font-size: 12px;
  font-weight: bold;
  fill: #1d8a72;
}
```
